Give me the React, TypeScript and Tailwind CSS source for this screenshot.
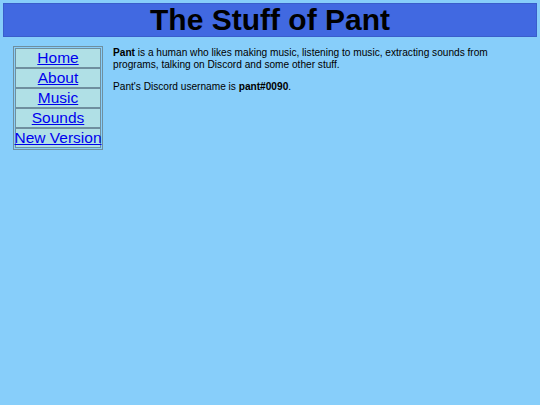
export default function App() {
  const links = ["Home", "About", "Music", "Sounds", "New Version"];
  return (
    <div className="min-h-[405px] bg-[#87cefa] p-[3px] font-['Liberation_Sans',Arial,sans-serif] text-black">
      <div className="h-[34px] border border-[#3a5ecb] bg-[#4169e1] flex items-center justify-center">
        <h1 className="text-[30px] font-bold leading-none">The Stuff of Pant</h1>
      </div>
      <div className="flex mt-[9px] pl-[10px]">
        <div className="w-[90px] shrink-0 border border-[#6f8f9f] p-px flex flex-col">
          {links.map((l) => (
            <div key={l} className="h-[20px] border border-[#6f8f9f] bg-[#b0e0e6] flex items-center justify-center whitespace-nowrap">
              <a href="#" className="text-[15.5px] leading-none text-[#0000ee] underline">{l}</a>
            </div>
          ))}
        </div>
        <div className="ml-[10px] pt-px text-[10.15px] leading-[12px]">
          <p>
            <b>Pant</b> is a human who likes making music, listening to music, extracting sounds from
            <br />
            programs, talking on Discord and some other stuff.
          </p>
          <p className="mt-[10px]">
            Pant's Discord username is <b>pant#0090</b>.
          </p>
        </div>
      </div>
    </div>
  );
}
